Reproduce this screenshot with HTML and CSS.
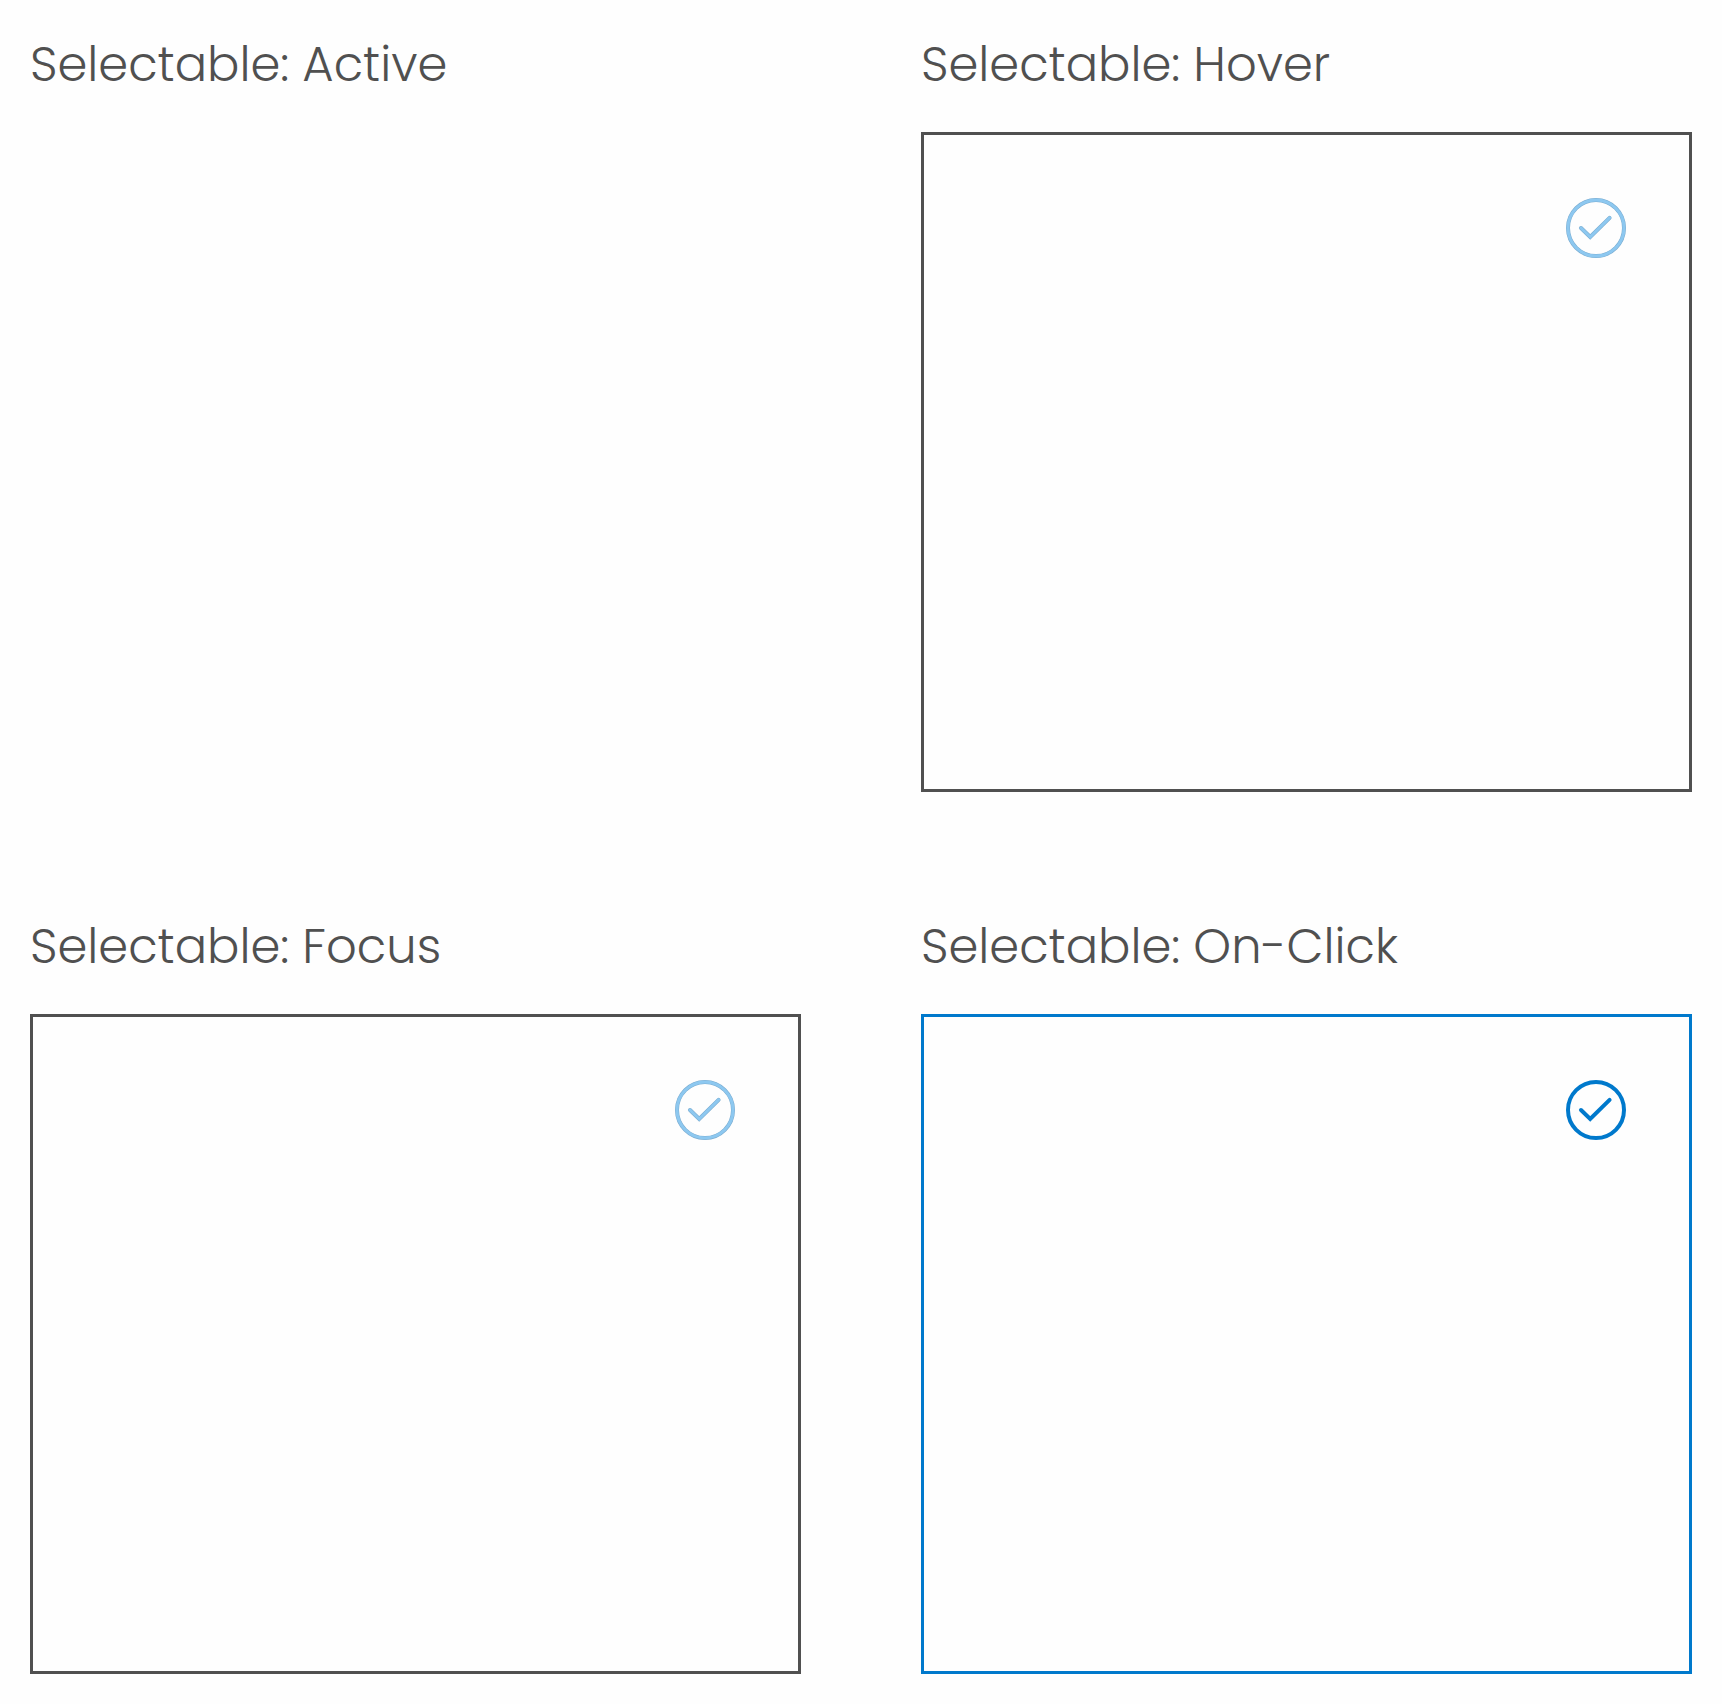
FILE: index.html
```html
<!DOCTYPE html>
<html lang="en">
<head>
  <meta charset="utf-8">
  <meta name="viewport" content="width=device-width, initial-scale=1">
  <title>Selectable card states</title>
  <link rel="stylesheet" href="styles.css">
</head>
<body>
  <svg class="sprite" aria-hidden="true">
    <symbol id="check-circle" viewBox="0 0 60 60">
      <circle cx="30" cy="30" r="28"/>
      <path d="M15 30L24.2 39L43.6 19.8"/>
    </symbol>
  </svg>
  <main class="states">
    <section class="state">
      <h2 class="state-title" id="active">Selectable: Active</h2>
      <button class="card" type="button" aria-labelledby="active"></button>
    </section>
    <section class="state">
      <h2 class="state-title" id="hover">Selectable: Hover</h2>
      <button class="card card-hover" type="button" aria-labelledby="hover">
        <svg class="check" aria-hidden="true"><use class="check-edge" href="#check-circle"/><use class="check-core" href="#check-circle"/></svg>
      </button>
    </section>
    <section class="state">
      <h2 class="state-title" id="focus">Selectable: Focus</h2>
      <button class="card card-focus" type="button" aria-labelledby="focus">
        <svg class="check" aria-hidden="true"><use class="check-edge" href="#check-circle"/><use class="check-core" href="#check-circle"/></svg>
      </button>
    </section>
    <section class="state">
      <h2 class="state-title" id="click">Selectable: On-Click</h2>
      <button class="card card-selected" type="button" aria-pressed="true" aria-labelledby="click">
        <svg class="check" aria-hidden="true"><use href="#check-circle"/></svg>
      </button>
    </section>
  </main>
</body>
</html>
```
FILE: styles.css
```css
* {
  box-sizing: border-box;
}

body {
  margin: 0;
  background: #fefefe;
  color: #505050;
  font-family: Poppins, Inter, "Liberation Sans", sans-serif;
}

.sprite {
  display: none;
}

.states {
  display: grid;
  grid-template-columns: 1fr 1fr;
  gap: 120px;
  padding: 30px;
}

.state {
  display: flex;
  flex-direction: column;
  gap: 32px;
}

.state-title {
  margin: 0;
  font-size: 48px;
  font-weight: 300;
  font-kerning: none;
  line-height: 70px;
}

.card {
  display: flex;
  justify-content: flex-end;
  align-items: flex-start;
  width: 100%;
  min-height: 660px;
  padding: 63px;
  border: 3px solid transparent;
  border-radius: 0;
  background: #fefefe;
  color: #8dc8f0;
  cursor: pointer;
}

.card-hover,
.card-focus {
  border-color: #505050;
}

.card-selected {
  border-color: #0079cc;
  color: #0079cc;
}

.check {
  width: 60px;
  height: 60px;
  fill: none;
  stroke: currentColor;
  stroke-width: 4;
  stroke-linecap: round;
}

.check-edge {
  stroke: #7aacd0;
}

.check-core {
  stroke-width: 3;
}
```
